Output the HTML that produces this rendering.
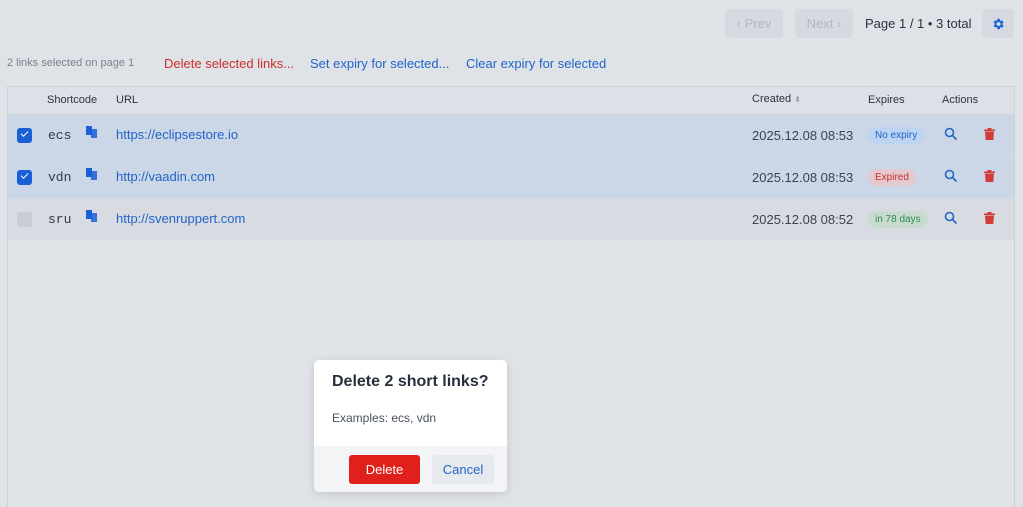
<!DOCTYPE html><html><head><style>
body{margin:0;width:1023px;height:503px;background:#dfe2e7;font-family:"Liberation Sans",sans-serif;position:relative;overflow:hidden;color:#2a3340}
.a{position:absolute;white-space:nowrap}
.btn{position:absolute;border-radius:4px;background:#d6dae0;font-size:13px;text-align:center;line-height:29px}
.tbl{position:absolute;left:7px;top:86px;width:1006px;height:420px;border:1px solid #cfd3d9;border-bottom:none}
.row{position:absolute;left:0;width:1006px;height:41px;border-bottom:1px solid #d3d9e2}
.cb{position:absolute;left:9px;top:13px;width:15px;height:15px;border-radius:3px;background:#1a5fd6}
.cb.on:after{content:"";position:absolute;left:4px;top:3px;width:6px;height:3px;border-left:1.6px solid #fff;border-bottom:1.6px solid #fff;transform:rotate(-45deg)}
.code{position:absolute;left:40px;top:13px;font-family:"Liberation Mono",monospace;font-size:13px;color:#333a44}
.url{position:absolute;left:108px;top:12px;font-size:13px;color:#2165c8}
.dt{position:absolute;left:744px;top:13px;font-size:13px;color:#3a4350}
.pill{position:absolute;left:860px;top:12px;height:17px;border-radius:9px;font-size:10px;line-height:17px;padding:0 7px}
</style></head><body>
<div class="btn" style="left:725px;top:9px;width:58px;color:#b0b7c1">‹ Prev</div>
<div class="btn" style="left:795px;top:9px;width:58px;color:#b0b7c1">Next ›</div>
<div class="a" style="left:865px;top:16px;font-size:13px;color:#2a3340">Page 1 / 1 • 3 total</div>
<div class="btn" style="left:982px;top:9px;width:32px;height:29px"><svg width="14" height="14" viewBox="0 0 24 24" style="margin-top:8px"><path fill="#1a5fd6" d="M19.4 13a7.5 7.5 0 000-2l2.1-1.6-2-3.5-2.5 1a7.6 7.6 0 00-1.7-1L15 3h-4l-.4 2.7a7.6 7.6 0 00-1.7 1l-2.5-1-2 3.5L6.6 11a7.5 7.5 0 000 2l-2.1 1.6 2 3.5 2.5-1a7.6 7.6 0 001.7 1L11 21h4l.4-2.7a7.6 7.6 0 001.7-1l2.5 1 2-3.5zM13 15.5a3.5 3.5 0 110-7 3.5 3.5 0 010 7z"/></svg></div>
<div class="a" style="left:7px;top:57px;font-size:11px;color:#7a828d">2 links selected on page 1</div>
<div class="a" style="left:164px;top:56px;font-size:13px;color:#c9302c">Delete selected links...</div>
<div class="a" style="left:310px;top:56px;font-size:13px;color:#2165c8">Set expiry for selected...</div>
<div class="a" style="left:466px;top:56px;font-size:13px;color:#2165c8">Clear expiry for selected</div>
<div class="tbl">
 <div class="row" style="top:0;height:27px;background:#dde0e6;border-bottom:1px solid #d3d7dd">
  <div class="a" style="left:39px;top:7px;font-size:11px">Shortcode</div>
  <div class="a" style="left:108px;top:7px;font-size:11px">URL</div>
  <div class="a" style="left:744px;top:6px;font-size:11px">Created <span style="color:#9aa1ab;font-size:8px">⬍</span></div>
  <div class="a" style="left:860px;top:7px;font-size:11px">Expires</div>
  <div class="a" style="left:934px;top:7px;font-size:11px">Actions</div>
 </div>
 <div class="row" style="top:28px;background:#cbd6e6"><div class="cb on"></div><div class="code">ecs</div><div class="url">https://eclipsestore.io</div><div class="dt">2025.12.08 08:53</div><div class="pill" style="background:#bcd3f2;color:#2165c8">No expiry</div></div>
 <div class="row" style="top:70px;background:#cbd6e6"><div class="cb on"></div><div class="code">vdn</div><div class="url">http://vaadin.com</div><div class="dt">2025.12.08 08:53</div><div class="pill" style="background:#e4c9cf;color:#c9302c">Expired</div></div>
 <div class="row" style="top:112px;background:#d8dbe1;border-bottom:none"><div class="cb" style="background:#c8ccd3"></div><div class="code">sru</div><div class="url">http://svenruppert.com</div><div class="dt">2025.12.08 08:52</div><div class="pill" style="background:#c7dccf;color:#2f8a4f">in 78 days</div></div>
</div>
<svg style="position:absolute;left:86px;top:126px" width="13" height="100"><g fill="#1a5fd6"><g id="c"><path d="M0 0h6v9H0z"/><path d="M6 3h5v9H5V9h1z" opacity=".85"/></g><use href="#c" y="42"/><use href="#c" y="84"/></g></svg>
<svg style="position:absolute;left:944px;top:127px" width="14" height="100"><g fill="none" stroke="#2165c8" stroke-width="1.6"><g id="s"><circle cx="5.5" cy="5.5" r="4"/><path d="M8.5 8.5l4 4"/></g><use href="#s" y="42"/><use href="#s" y="84"/></g></svg>
<svg style="position:absolute;left:984px;top:128px" width="12" height="100"><g fill="#d33a3a"><g id="t"><path d="M0 1.5h11v1.5H0zM3.5 0h4v1.5h-4zM1 3.5h9l-.7 8.5H1.7z"/></g><use href="#t" y="42"/><use href="#t" y="84"/></g></svg>
<div class="a" style="left:314px;top:360px;width:193px;height:132px;background:#fff;border-radius:5px;box-shadow:0 2px 8px rgba(0,0,0,.12);overflow:hidden">
 <div class="a" style="left:18px;top:13px;font-size:16px;font-weight:bold;color:#26303c">Delete 2 short links?</div>
 <div class="a" style="left:18px;top:51px;font-size:12px;color:#4a525d">Examples: ecs, vdn</div>
 <div class="a" style="left:0;top:86px;width:193px;height:46px;background:#f3f4f6"></div>
 <div class="a" style="left:35px;top:95px;width:71px;height:29px;background:#e0201a;border-radius:3px;color:#fff;font-size:13px;text-align:center;line-height:29px">Delete</div>
 <div class="a" style="left:118px;top:95px;width:62px;height:29px;background:#e6e9ed;border-radius:3px;color:#2165c8;font-size:13px;text-align:center;line-height:29px">Cancel</div>
</div>
</body></html>
